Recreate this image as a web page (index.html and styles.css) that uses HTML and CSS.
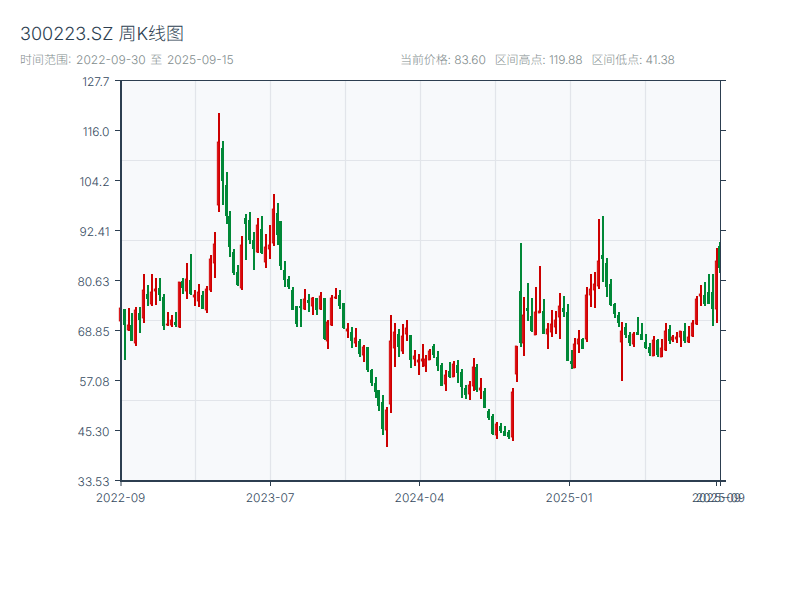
FILE: index.html
```html
<!DOCTYPE html>
<html lang="en">
<head>
  <meta charset="UTF-8">
  <meta name="viewport" content="width=device-width, initial-scale=1.0">
  <title>300223.SZ 周K线图</title>
  <link rel="stylesheet" href="styles.css">
</head>
<body>
  <div class="header">
    <h1>300223.SZ 周K线图</h1>
    <div class="meta">
      <div class="range">时间范围: 2022-09-30 至 2025-09-15</div>
      <div class="stats">
        <span>当前价格: 83.60</span>
        <span>区间高点: 119.88</span>
        <span>区间低点: 41.38</span>
      </div>
    </div>
  </div>

  <svg id="chart" class="chart" viewBox="0 70 800 530" width="800" height="530">
    <rect class="plot" x="121" y="81" width="599" height="400"></rect>
    <g id="grid"></g>
    <g id="candles"></g>
    <g id="axes"></g>
    <g class="y-labels">
      <text x="109.500" y="86">127.7</text>
      <text x="109.500" y="135.500">116.0</text>
      <text x="109.500" y="185.500">104.2</text>
      <text x="109.500" y="235.500">92.41</text>
      <text x="109.500" y="285.500">80.63</text>
      <text x="109.500" y="335.500">68.85</text>
      <text x="109.500" y="385.500">57.08</text>
      <text x="109.500" y="435.500">45.30</text>
      <text x="109.500" y="485.500">33.53</text>
    </g>
    <g class="x-labels">
      <text x="120.500" y="502">2022-09</text>
      <text x="270" y="502">2023-07</text>
      <text x="419.500" y="502">2024-04</text>
      <text x="569" y="502">2025-01</text>
      <text x="716.400" y="502">2025-09</text>
      <text x="720.400" y="502">2025-09</text>
    </g>
  </svg>

  <script src="chart.js"></script>
</body>
</html>
```

FILE: styles.css
```css
body {
  font-family: 'Inter', 'Noto Sans CJK SC', sans-serif;
  background-color: #fff;
  margin: 0;
  padding: 0;
  text-rendering: geometricPrecision;
}

.header {
  height: 70px;
  padding: 23px 20px 0;
  box-sizing: border-box;
}

h1 {
  margin: 0;
  font-size: 18px;
  font-weight: 300;
  line-height: 24px;
  color: #2c3e50;
}

.meta {
  display: flex;
  margin-top: 4px;
  font-size: 12px;
  font-weight: 300;
  line-height: 18px;
  color: #7f8c8d;
}

.range {
  width: 380px;
  word-spacing: 1.300px;
}

.stats {
  display: flex;
  gap: 9px;
  letter-spacing: -0.100px;
}

.chart {
  display: block;
}

.plot {
  fill: #f7f9fb;
}

.grid-line {
  stroke: #e2e5ea;
  stroke-width: 1.2;
}

.axis-line {
  stroke: #2c3e50;
  stroke-width: 1;
}

.axis-line.thick {
  stroke-width: 2;
}

.wick-up {
  fill: #cc0000;
  shape-rendering: crispEdges;
}

.body-up {
  fill: #f0141e;
  stroke: #cc0000;
  stroke-width: 0.8;
}

.wick-down,
.body-down {
  fill: #008837;
  shape-rendering: crispEdges;
}

.y-labels text,
.x-labels text {
  font-size: 12px;
  font-weight: 300;
  fill: #34495e;
}

.y-labels text {
  text-anchor: end;
}

.x-labels text {
  text-anchor: middle;
}
```

FILE: chart.js
```js
const SVG_NS = 'http://www.w3.org/2000/svg';

// high y, low y, body top y, body bottom y, r = up / g = down (page pixels)
const candles = [
  [308, 321, 308, 321, 'r'], [309, 360, 309, 325, 'g'], [308, 331, 325, 330, 'r'], [313, 341, 325, 341, 'g'],
  [307, 346, 310, 343, 'r'], [307, 333, 313, 320, 'g'], [274, 323, 290, 318, 'r'], [285, 306, 294, 299, 'g'],
  [274, 306, 292, 304, 'r'], [278, 305, 289, 291, 'r'], [278, 301, 288, 295, 'g'], [294, 330, 297, 326, 'g'],
  [312, 326, 324, 325, 'r'], [315, 327, 320, 325, 'r'], [312, 327, 322, 325, 'g'], [282, 328, 282, 327, 'r'],
  [278, 294, 281, 288, 'g'], [263, 299, 279, 291, 'r'], [254, 295, 280, 294, 'g'], [290, 306, 295, 297, 'r'],
  [284, 307, 292, 301, 'r'], [291, 309, 295, 309, 'g'], [286, 313, 289, 310, 'r'], [255, 292, 259, 290, 'r'],
  [232, 278, 244, 263, 'r'], [113, 212, 142, 205, 'r'], [141, 205, 148, 181, 'g'], [172, 224, 185, 216, 'g'],
  [211, 257, 216, 247, 'g'], [249, 275, 252, 273, 'g'], [265, 286, 272, 285, 'g'], [236, 290, 245, 288, 'r'],
  [214, 260, 218, 224, 'g'], [212, 244, 220, 240, 'g'], [232, 270, 240, 249, 'g'], [218, 253, 225, 252, 'r'],
  [216, 254, 229, 253, 'g'], [234, 268, 247, 262, 'r'], [225, 259, 245, 249, 'r'], [194, 246, 209, 243, 'r'],
  [203, 245, 213, 235, 'g'], [221, 270, 221, 266, 'g'], [261, 287, 270, 280, 'g'], [276, 289, 279, 287, 'g'],
  [287, 310, 290, 310, 'g'], [306, 327, 306, 324, 'g'], [299, 327, 306, 308, 'g'], [289, 310, 299, 309, 'r'],
  [294, 312, 300, 303, 'g'], [297, 315, 298, 306, 'r'], [298, 315, 298, 310, 'g'], [292, 310, 296, 309, 'r'],
  [298, 340, 298, 339, 'g'], [320, 349, 322, 341, 'r'], [295, 326, 298, 325, 'r'], [288, 299, 297, 298, 'r'],
  [290, 309, 295, 306, 'g'], [303, 329, 303, 328, 'g'], [323, 338, 329, 331, 'r'], [327, 348, 332, 341, 'g'],
  [328, 347, 338, 343, 'r'], [339, 357, 341, 354, 'g'], [345, 362, 347, 355, 'r'], [347, 372, 347, 370, 'g'],
  [369, 386, 370, 383, 'g'], [377, 398, 383, 392, 'g'], [390, 411, 390, 406, 'g'], [395, 435, 402, 429, 'g'],
  [407, 447, 410, 430, 'r'], [315, 413, 341, 404, 'r'], [323, 367, 332, 348, 'r'], [329, 357, 334, 347, 'g'],
  [324, 354, 336, 351, 'r'], [320, 341, 328, 334, 'r'], [335, 368, 335, 360, 'g'], [350, 366, 356, 359, 'r'],
  [354, 375, 360, 362, 'r'], [344, 367, 359, 361, 'r'], [355, 372, 359, 366, 'r'], [349, 360, 351, 360, 'r'],
  [344, 358, 346, 355, 'g'], [351, 371, 357, 366, 'g'], [363, 386, 365, 386, 'g'], [370, 391, 375, 384, 'r'],
  [362, 378, 371, 377, 'g'], [361, 377, 364, 377, 'r'], [360, 383, 365, 373, 'g'], [369, 398, 372, 387, 'g'],
  [385, 399, 388, 395, 'g'], [381, 400, 385, 394, 'r'], [358, 391, 367, 386, 'r'], [364, 392, 367, 390, 'g'],
  [378, 399, 388, 390, 'r'], [388, 408, 391, 408, 'g'], [409, 420, 411, 418, 'g'], [414, 435, 416, 434, 'g'],
  [422, 439, 424, 435, 'r'], [423, 433, 426, 431, 'g'], [426, 436, 431, 436, 'g'], [430, 439, 432, 437, 'g'],
  [388, 441, 392, 437, 'r'], [346, 382, 346, 374, 'r'], [243, 347, 291, 343, 'g'], [297, 356, 315, 343, 'r'],
  [283, 321, 308, 311, 'g'], [298, 332, 316, 331, 'g'], [287, 335, 312, 335, 'r'], [266, 313, 311, 313, 'r'],
  [299, 334, 311, 334, 'g'], [323, 349, 329, 334, 'r'], [310, 337, 324, 332, 'r'], [311, 334, 320, 327, 'r'],
  [293, 339, 306, 317, 'r'], [296, 317, 308, 312, 'g'], [304, 361, 312, 361, 'g'], [350, 369, 361, 364, 'g'],
  [338, 368, 344, 368, 'r'], [330, 353, 339, 344, 'r'], [338, 349, 339, 349, 'g'], [287, 342, 295, 339, 'r'],
  [274, 307, 289, 295, 'r'], [272, 308, 284, 290, 'r'], [219, 289, 261, 286, 'r'], [216, 282, 255, 259, 'g'],
  [258, 297, 263, 287, 'g'], [279, 306, 284, 305, 'g'], [303, 318, 304, 314, 'g'], [312, 327, 315, 323, 'g'],
  [322, 381, 331, 342, 'r'], [323, 338, 327, 335, 'g'], [332, 346, 335, 343, 'g'], [332, 347, 334, 344, 'r'],
  [317, 335, 332, 335, 'g'], [323, 340, 334, 340, 'g'], [334, 349, 342, 348, 'g'], [343, 356, 347, 353, 'g'],
  [336, 356, 340, 356, 'r'], [339, 357, 340, 355, 'g'], [339, 357, 348, 357, 'r'], [323, 351, 331, 350, 'r'],
  [325, 344, 329, 341, 'g'], [335, 342, 337, 340, 'r'], [332, 343, 337, 339, 'r'], [331, 347, 331, 337, 'r'],
  [323, 343, 331, 341, 'g'], [326, 343, 337, 342, 'r'], [320, 337, 323, 336, 'r'], [296, 325, 299, 324, 'r'],
  [285, 306, 294, 296, 'r'], [282, 306, 295, 304, 'g'], [274, 304, 292, 304, 'g'], [274, 326, 292, 309, 'g'],
  [248, 323, 261, 309, 'r'], [242, 273, 246, 268, 'g']
];

function add(parent, tag, attrs) {
  const el = document.createElementNS(SVG_NS, tag);
  for (const key in attrs) {
    el.setAttribute(key, attrs[key]);
  }
  parent.appendChild(el);
  return el;
}

function line(parent, x1, y1, x2, y2, cls) {
  add(parent, 'line', { x1, y1, x2, y2, class: cls });
}

function drawGrid() {
  const grid = document.getElementById('grid');
  for (let i = 1; i < 8; i++) {
    const x = 120.5 + i * 75;
    line(grid, x, 81, x, 481, 'grid-line');
  }
  for (let i = 1; i < 5; i++) {
    const y = 80.5 + i * 80;
    line(grid, 121, y, 720, y, 'grid-line');
  }
}

function drawCandles() {
  const group = document.getElementById('candles');
  candles.forEach((c, i) => {
    const x = Math.round(119.7 + i * 3.92);
    const up = c[4] === 'r';
    add(group, 'rect', { x, y: c[0], width: 2, height: c[1] - c[0], class: up ? 'wick-up' : 'wick-down' });
    if (up) {
      add(group, 'rect', { x: x - 0.75, y: c[2], width: 1.6, height: Math.max(c[3] - c[2], 1), class: 'body-up' });
    } else {
      add(group, 'rect', { x: x - 1, y: c[2], width: 2, height: Math.max(c[3] - c[2], 1), class: 'body-down' });
    }
  });
}

function drawAxes() {
  const axes = document.getElementById('axes');
  line(axes, 121, 80.5, 726, 80.5, 'axis-line');
  line(axes, 720.5, 80, 720.5, 486, 'axis-line');
  line(axes, 121, 481, 726, 481, 'axis-line thick');
  line(axes, 121, 80, 121, 482, 'axis-line thick');
  for (let i = 0; i < 9; i++) {
    const y = 80.5 + i * 50;
    line(axes, 115, y, 120, y, 'axis-line');
    line(axes, 721, y, 726, y, 'axis-line');
  }
  [121, 270.5, 419.5, 569.5, 716.5].forEach(x => {
    line(axes, x, 481, x, 486, 'axis-line');
  });
}

drawGrid();
drawCandles();
drawAxes();
```
